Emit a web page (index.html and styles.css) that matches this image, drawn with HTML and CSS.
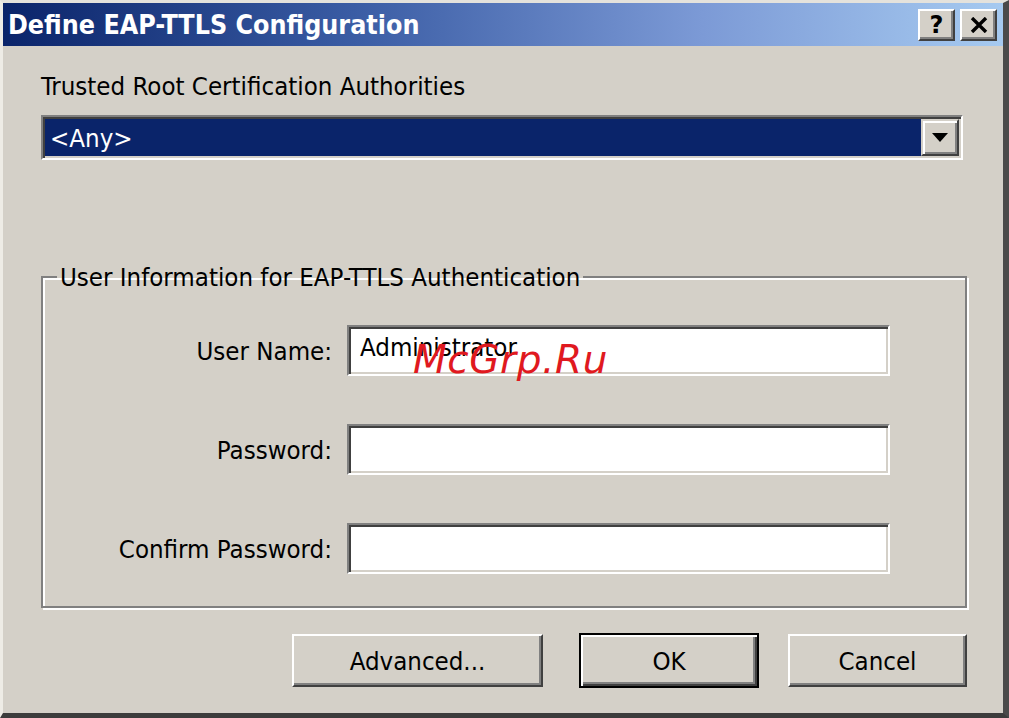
FILE: index.html
```html
<!DOCTYPE html>
<html>
<head>
  <meta charset="utf-8">
  <title>Define EAP-TTLS Configuration</title>
  <link rel="stylesheet" href="styles.css">
</head>
<body>

<div class="window">
  <div class="titlebar">
    <span class="title">Define EAP-TTLS Configuration</span>
    <div class="caption-buttons">
      <button class="caption-btn help">?</button>
      <button class="caption-btn close">
        <svg width="18" height="16" viewBox="0 0 18 16"><path d="M2 1 L16 15 M16 1 L2 15" stroke="#000" stroke-width="3.4"/></svg>
      </button>
    </div>
  </div>

  <div class="client">
    <div class="section-label">Trusted Root Certification Authorities</div>
    <div class="combo">
      <div class="combo-value">&lt;Any&gt;</div>
      <div class="combo-arrow">
        <svg width="16" height="9" viewBox="0 0 16 9"><path d="M0 0 H16 L8 9 Z" fill="#000"/></svg>
      </div>
    </div>

    <fieldset class="group">
      <legend>User Information for EAP-TTLS Authentication</legend>
      <div class="form-grid">
        <label class="field-label">User Name:</label>
        <div class="field">Administrator</div>
        <label class="field-label">Password:</label>
        <div class="field"></div>
        <label class="field-label">Confirm Password:</label>
        <div class="field"></div>
      </div>
    </fieldset>

    <div class="actions">
      <button class="btn advanced">Advanced...</button>
      <button class="btn ok default">OK</button>
      <button class="btn cancel">Cancel</button>
    </div>
  </div>

  <div class="watermark">McGrp.Ru</div>
</div>

</body>
</html>
```

FILE: styles.css
```css
html, body { margin: 0; padding: 0; }
body { width: 1009px; height: 718px; overflow: hidden; background: #d4d0c8; }

.window {
  position: relative;
  box-sizing: border-box;
  width: 1009px; height: 718px;
  background: #d4d0c8;
  border-top: 3px solid #e4e2dc;
  border-left: 3px solid #eeece6;
  border-right: 6px solid #4a4a4a;
  border-bottom: 5px solid #3c3c3c;
  font-family: "DejaVu Sans Condensed", "DejaVu Sans", sans-serif;
  font-size: 25.6px;
  color: #000;
  display: flex; flex-direction: column;
}

/* title bar */
.titlebar {
  height: 43px;
  display: flex; align-items: center; justify-content: space-between;
  padding: 0 6px 0 5px;
  background: linear-gradient(to right, #0a246a 0%, #3a5ca4 35%, #7c9ad6 70%, #a6caf0 100%);
}
.title { color: #fff; font-weight: bold; font-size: 26.6px; }
.caption-buttons { display: flex; gap: 5px; }
.caption-btn {
  box-sizing: border-box;
  width: 37px; height: 32px;
  padding: 0; margin: 0;
  background: #d4d0c8;
  border: 2px solid; border-color: #fff #404040 #404040 #fff;
  box-shadow: inset -2px -2px 0 #808080;
  display: flex; align-items: center; justify-content: center;
  font-family: "DejaVu Sans", sans-serif; font-weight: bold; font-size: 24px; line-height: 1;
}

/* client area */
.client { flex: 1; display: flex; flex-direction: column; padding: 0 36px 0 38px; }
.section-label { margin-top: 25px; line-height: 30px; }

.combo {
  margin-top: 14px;
  box-sizing: border-box; height: 45px; width: 922px;
  display: flex;
  background: #fff;
  border: 2px solid; border-color: #808080 #fff #fff #808080;
  box-shadow: inset 2px 2px 0 #404040, inset -2px -2px 0 #d4d0c8;
  padding: 2px;
}
.combo-value {
  flex: 1;
  background: #0a246a; color: #fff;
  display: flex; align-items: center; padding-left: 5px;
}
.combo-arrow {
  box-sizing: border-box; width: 38px;
  background: #d4d0c8;
  border: 2px solid; border-color: #d4d0c8 #404040 #404040 #d4d0c8;
  box-shadow: inset 2px 2px 0 #fff, inset -2px -2px 0 #808080;
  display: flex; align-items: center; justify-content: center;
}

/* group box */
.group {
  margin: 102px 0 0 0; padding: 33px 0 32px 0;
  width: 926px; box-sizing: border-box;
  border: 2px solid #808080;
  box-shadow: 2px 2px 0 #fff, inset 2px 2px 0 #fff;
}
.group legend { margin-left: 14px; padding: 0 3px; line-height: 30px; }

.form-grid {
  display: grid;
  grid-template-columns: 289px 543px;
  column-gap: 15px; row-gap: 48px;
  align-items: center;
}
.field-label { text-align: right; }
.field {
  box-sizing: border-box; height: 51px;
  background: #fff;
  border: 2px solid; border-color: #808080 #fff #fff #808080;
  box-shadow: inset 2px 2px 0 #404040, inset -2px -2px 0 #d4d0c8;
  padding: 5px 0 0 11px;
}

/* dialog buttons */
.actions { margin-top: 25px; display: flex; align-items: center; justify-content: flex-end; }
.btn {
  box-sizing: border-box; height: 53px;
  margin: 0; padding: 0;
  background: #d4d0c8;
  font: inherit; color: #000;
  border: 2px solid; border-color: #fff #404040 #404040 #fff;
  box-shadow: inset -2px -2px 0 #808080;
}
.btn.advanced { width: 251px; margin-right: 36px; }
.btn.ok { width: 180px; height: 55px; margin-right: 29px; }
.btn.cancel { width: 179px; }
.btn.default {
  border: 2px solid #000;
  box-shadow: inset 2px 2px 0 #fff, inset -2px -2px 0 #404040, inset -4px -4px 0 #808080;
}

.watermark {
  position: absolute; left: 410px; top: 337px;
  font-family: "DejaVu Sans", sans-serif; font-style: italic;
  font-size: 39px; line-height: 39px; letter-spacing: 0.6px;
  color: #e0191f;
  pointer-events: none;
}
```
